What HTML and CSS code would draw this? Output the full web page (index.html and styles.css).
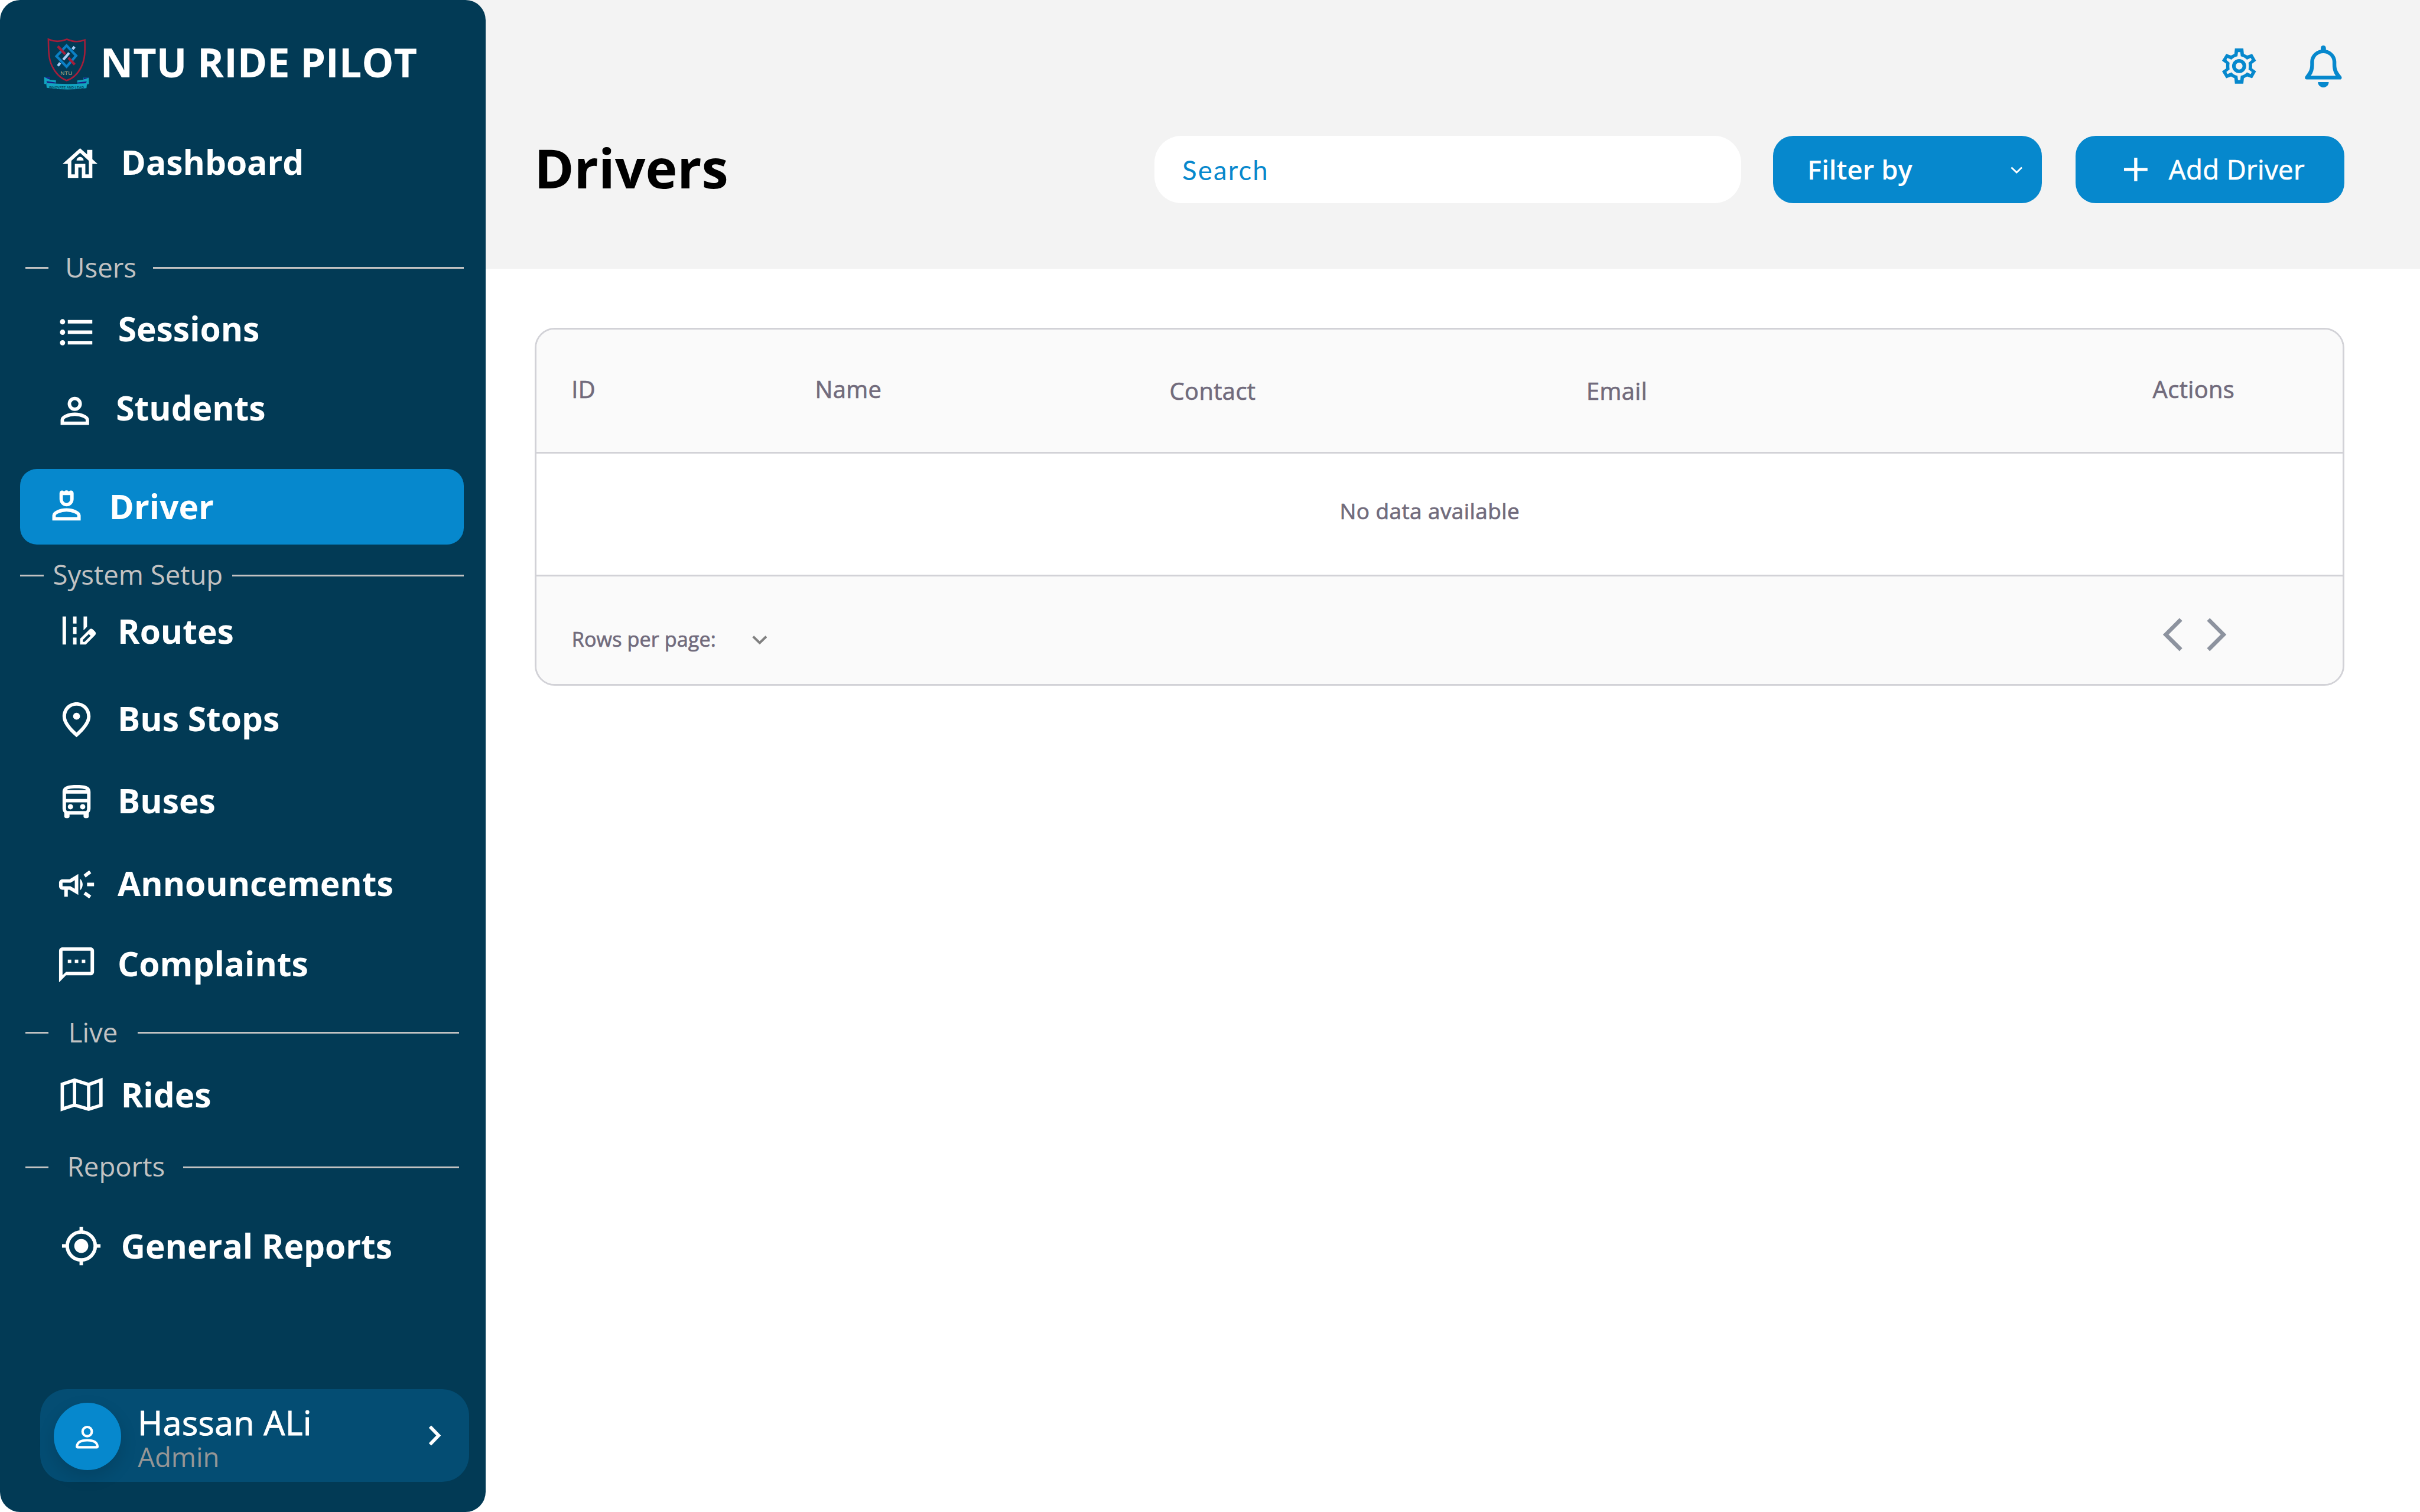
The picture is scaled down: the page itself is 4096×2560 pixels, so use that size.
FILE: index.html
```html
<!DOCTYPE html>
<html lang="en">
<head>
<meta charset="utf-8">
<title>NTU Ride Pilot – Drivers</title>
<link rel="stylesheet" href="styles.css">
</head>
<body>
<aside class="sidebar">
  <div class="brand">
    <svg class="brand-logo" viewBox="60 48 360 400">
      <path d="M106 71Q170 100 238 71Q306 100 366 76C368 150 370 210 340 270C318 314 280 352 236 366C190 348 155 310 132 262C104 205 108 140 106 71Z" fill="none" stroke="#a41e3a" stroke-width="11"/>
      <path d="M236 116L304 189L236 267L164 192Z" fill="none" stroke="#0b80c5" stroke-width="18"/>
      <path d="M293 125L278 142M254 169L212 217M190 240L174 261" stroke="#a9cff5" stroke-width="18"/>
      <path d="M173 121L226 178M249 203L294 252" stroke="#a41e3a" stroke-width="18"/>
      <text x="234" y="325" text-anchor="middle" class="crest-name">NTU</text>
      <path d="M76 341L116 341V360L160 364V388L90 384V392L76 390ZM395 345L356 345V360L312 366V390L382 384V395L395 390Z" fill="#12a3c0"/>
      <path d="M78 342H116V359ZM394 346H358V358ZM92 370L160 380V388L98 383ZM380 372L312 380V388L374 385Z" fill="#1b1b86"/>
      <path d="M90 382Q236 398 382 384L378 420Q236 440 94 418Z" fill="#12a3c0"/>
      <text x="235" y="423" text-anchor="middle" class="crest-motto">INNOVATE AND LEAD</text>
    </svg>
    <span class="brand-name">NTU RIDE PILOT</span>
  </div>
  <nav class="nav">
    <a class="item item-dashboard">
      <svg class="icon" viewBox="0 0 24 24"><path d="M19 9.3V4h-3v2.6L12 3 2 12h3v8h6v-6h2v6h6v-8h3l-3-2.7zM17 18h-2v-6H9v6H7v-7.81l5-4.5 5 4.5V18zM10 10h4c0-1.1-.9-2-2-2s-2 .9-2 2z"/></svg>
      <span>Dashboard</span>
    </a>
    <div class="divider divider-users"><span>Users</span></div>
    <a class="item item-sessions">
      <svg class="icon" viewBox="0 0 24 24"><path d="M7 5h14v2H7zM7 11h14v2H7zM7 17h14v2H7z"/><circle cx="4" cy="6" r="1.5"/><circle cx="4" cy="12" r="1.5"/><circle cx="4" cy="18" r="1.5"/></svg>
      <span>Sessions</span>
    </a>
    <a class="item item-students">
      <svg class="icon line" viewBox="84 -6.5 300 300"><circle cx="234" cy="94" r="38.5"/><path d="M145 232V208C145 188 190 168 234.5 168S324 188 324 208V232Z"/></svg>
      <span>Students</span>
    </a>
    <a class="item item-driver">
      <svg class="icon" viewBox="24 678.5 300 300"><path fill-rule="evenodd" d="M124 735C124 712 146 708 157 722C164 711 184 711 190 722C202 708 225 712 225 735V776A50.500 51 0 0 1 124 776ZM148 747V777A26 27 0 0 0 200 777V747Z"/><path class="line" d="M85 916V893C85 873 130 853 174 853S263 873 263 893V916Z"/></svg>
      <span>Driver</span>
    </a>
    <div class="divider divider-system"><span>System Setup</span></div>
    <a class="item item-routes">
      <svg class="icon" viewBox="0 0 24 24"><path d="M18 4h-2v7.900l2-2V4zM4 4h2v16H4V4zM10 4h2v4h-2V4zM10 10h2v4h-2v-4zM10 16h2v4h-2v-4zM22.560 12.590l-1.150-1.150c-.590-.590-1.540-.590-2.120 0L14 16.730V20h3.270l5.290-5.290C23.150 14.120 23.150 13.170 22.560 12.590zM16.580 18.450h-1.030v-1.030L19 13.970 20.030 15 16.580 18.450z"/></svg>
      <span>Routes</span>
    </a>
    <a class="item item-stops">
      <svg class="icon" viewBox="0 0 24 24"><path fill-rule="evenodd" d="M12 2c4.200 0 8 3.220 8 8.200 0 3.320-2.670 7.250-8 11.800-5.330-4.550-8-8.480-8-11.800C4 5.220 7.800 2 12 2zM18 10.200C18 6.570 15.350 4 12 4s-6 2.570-6 6.200c0 2.340 1.950 5.440 6 9.140 4.050-3.700 6-6.800 6-9.140z"/><circle cx="12" cy="10" r="2"/></svg>
      <span>Bus Stops</span>
    </a>
    <a class="item item-buses">
      <svg class="icon" viewBox="0 0 24 24"><path fill-rule="evenodd" d="M12 2C8 2 4 2.500 4 6v9.500c0 .950.380 1.810 1 2.440V20c0 .550.450 1 1 1h1c.550 0 1-.450 1-1v-1h8v1c0 .550.450 1 1 1h1c.550 0 1-.450 1-1v-2.060c.620-.630 1-1.490 1-2.440V6c0-3.500-3.580-4-8-4zm5.660 2.990H6.340C6.890 4.460 8.310 4 12 4s5.110.460 5.660.990zm.340 2V10H6V6.990h12zm-.340 9.740-.290.270H6.630l-.290-.270C6.210 16.620 6 16.370 6 15.500V12h12v3.500c0 .870-.210 1.120-.340 1.230z"/><circle cx="8.500" cy="14.500" r="1.500"/><circle cx="15.500" cy="14.500" r="1.500"/></svg>
      <span>Buses</span>
    </a>
    <a class="item item-announcements">
      <svg class="icon" viewBox="0 0 24 24"><path d="M18 11v2h4v-2h-4zM16 17.610c.960.710 2.210 1.650 3.200 2.390.400-.530.800-1.070 1.200-1.600-.990-.740-2.240-1.680-3.200-2.400-.400.540-.800 1.080-1.200 1.610zM20.400 5.600C20 5.070 19.600 4.530 19.200 4c-.990.740-2.240 1.680-3.200 2.400.400.530.800 1.070 1.200 1.600.960-.720 2.210-1.650 3.200-2.400zM15.500 12c0-1.330-.580-2.530-1.500-3.350v6.690c.920-.810 1.500-2.010 1.500-3.340z"/><path fill-rule="evenodd" d="M4 9c-1.100 0-2 .900-2 2v2c0 1.100.900 2 2 2h1v4h2v-4h1l5 3V6L8 9H4zM9.030 10.710L11 9.530v4.940l-1.970-1.180-.480-.290H4v-2h4.550l.480-.290z"/></svg>
      <span>Announcements</span>
    </a>
    <a class="item item-complaints">
      <svg class="icon" viewBox="0 0 24 24"><path fill-rule="evenodd" d="M20 2H4c-1.100 0-1.990.900-1.990 2L2 22l4-4h14c1.100 0 2-.900 2-2V4c0-1.100-.900-2-2-2zm0 14H6l-2 2V4h16v12z"/><path d="M7 9h2v2H7V9zm4 0h2v2h-2V9zm4 0h2v2h-2V9z"/></svg>
      <span>Complaints</span>
    </a>
    <div class="divider divider-live"><span>Live</span></div>
    <a class="item item-rides">
      <svg class="icon line" viewBox="36 639 25.400 25"><path d="M37.200 645.200L44.500 642.800L52.900 645.400L60.200 642.800V657.800L52.900 660.100L44.500 657.600L37.200 660ZM44.500 642.800V657.600M52.900 645.400V660.100"/></svg>
      <span>Rides</span>
    </a>
    <div class="divider divider-reports"><span>Reports</span></div>
    <a class="item item-general">
      <svg class="icon" viewBox="0 0 24 24"><circle cx="12" cy="12" r="4"/><circle cx="12" cy="12" r="8" fill="none" stroke="currentColor" stroke-width="2"/><path d="M11 1h2v3h-2zM11 20h2v3h-2zM1 11h3v2H1zM20 11h3v2h-3z"/></svg>
      <span>General Reports</span>
    </a>
  </nav>
  <div class="user">
    <div class="avatar">
      <svg viewBox="84 -6.500 300 300"><circle cx="234" cy="86" r="46"/><path d="M139 242C134 242 131 238 132 233C136 190 178 172 234 172S332 190 336 233C337 238 334 242 329 242Z"/></svg>
    </div>
    <div class="user-text">
      <span class="user-name">Hassan ALi</span>
      <span class="user-role">Admin</span>
    </div>
    <svg class="user-arrow" viewBox="0 0 8 13"><path d="M1 1.200L6.100 6.500L1 11.800"/></svg>
  </div>
</aside>
<main class="main">
  <header class="header">
    <div class="tools">
      <svg class="gear" viewBox="84 78 252 252"><path fill-rule="evenodd" d="M180 78H240L244 117L268 129L303 117L331 166L302 188Q304 204 302 220L331 241L303 291L267 278L244 291L240 330H180L176 291L152 278L118 291L88 241L118 220Q116 204 118 188L88 166L118 117L152 129L176 117ZM202 104L198 134Q170 142 155 158L126 146L119 160L142 180Q138 204 142 228L119 246L126 262L155 249Q172 268 198 273L202 304H218L222 273Q248 268 266 249L293 262L300 246L277 228Q281 204 277 180L300 160L293 146L266 158Q250 142 222 134L218 104Z"/><circle cx="210" cy="204" r="37.500" fill="none" stroke="currentColor" stroke-width="26"/></svg>
      <svg class="bell" viewBox="678 54 264 300"><path fill-rule="evenodd" d="M692 297C679 297 675 283 683 273C705 246 717 225 717 192V170C717 130 750 93 792 85V73C792 48 829 48 829 73V85C870 93 903 130 903 170V192C903 225 915 246 938 273C946 283 941 297 929 297ZM721 270H899C885 250 876 225 876 192V170C876 135 845 109 810 109C775 109 744 135 744 170V192C744 225 736 250 721 270Z"/><path d="M772 316H849C849 337 832 354 810.500 354S772 337 772 316Z"/></svg>
    </div>
    <div class="controls">
      <h1 class="title">Drivers</h1>
      <div class="search">Search</div>
      <div class="button filter">
        <span>Filter by</span>
        <svg class="filter-arrow" viewBox="0 0 7.200 4.400"><path d="M.5.500L3.600 3.500L6.700.500"/></svg>
      </div>
      <div class="button add">
        <svg class="plus" viewBox="0 0 14 14"><path d="M7 0V14M0 7H14"/></svg>
        <span class="medium">Add Driver</span>
      </div>
    </div>
  </header>
  <section class="table medium">
    <div class="table-head">
      <span class="raised">ID</span>
      <span class="raised">Name</span>
      <span>Contact</span>
      <span>Email</span>
      <span class="raised">Actions</span>
    </div>
    <div class="table-empty">No data available</div>
    <div class="table-foot">
      <span class="rows">Rows per page:</span>
      <svg class="rows-arrow" viewBox="0 0 9 5.400"><path d="M.6.600L4.500 4.400L8.400.600"/></svg>
      <div class="pager">
        <svg viewBox="0 0 12 20"><path d="M11 1L2 10L11 19"/></svg>
        <svg viewBox="0 0 12 20"><path d="M1 1L10 10L1 19"/></svg>
      </div>
    </div>
  </section>
</main>
</body>
</html>
```
FILE: styles.css
```css
/* 1rem is ten units of the 1440-unit wide layout */
html { font-size: calc(100vw / 144); }
* { box-sizing: border-box; }
body {
  margin: 0;
  height: 90rem;
  display: flex;
  background: #fff;
  overflow: hidden;
  font-family: "Open Sans", "Noto Sans", sans-serif;
  font-size: 1.6rem;
}
svg { display: block; flex: none; fill: currentColor; }

/* A weight between regular and semibold */
.medium {
  font-weight: 400;
  letter-spacing: .009em;
  -webkit-text-stroke: .016em currentColor;
}

/* Sidebar */
.sidebar {
  position: relative;
  z-index: 1;
  flex: none;
  width: 28.9rem;
  height: 90rem;
  border-radius: 1.2rem;
  background: #023a55;
  color: #fff;
}
.brand {
  height: 8.16rem;
  padding: 1.65rem 0 0 2.5rem;
  display: flex;
}
.brand-logo { width: 3rem; height: 3.333rem; margin-top: .5rem; overflow: visible; }
.brand-name {
  margin: .34rem 0 0 .47rem;
  font-size: 2.4rem;
  line-height: 3.4rem;
  font-weight: 700;
  white-space: nowrap;
}
.crest-name { font: 400 41px "Liberation Sans", sans-serif; fill: #b9ae84; }
.crest-motto { font: 700 24px "Liberation Sans", sans-serif; fill: #06485f; }

.item {
  display: flex;
  align-items: flex-start;
  height: 3rem;
  font-size: 2rem;
  line-height: 3rem;
  font-weight: 700;
  white-space: nowrap;
}
.icon { width: 2.5rem; height: 2.5rem; }
.line { fill: none; stroke: currentColor; stroke-width: 24.5; }

.item-dashboard { padding-left: 3.52rem; gap: 1.18rem; }
.item-dashboard .icon { margin-top: .36rem; }
.item-sessions { margin-top: 1.08rem; padding-left: 3.3rem; gap: 1.22rem; }
.item-sessions .icon { margin-top: .44rem; }
.item-students { margin-top: 1.69rem; padding-left: 3.2rem; gap: 1.2rem; }
.item-students .icon { margin-top: .44rem; }
.item-driver {
  margin: 2.14rem 1.3rem 0 1.2rem;
  width: 26.4rem;
  height: 4.5rem;
  padding: .76rem 0 0 1.5rem;
  gap: 1.3rem;
  border-radius: 1rem;
  background: #0688cd;
}
.item-driver .icon { margin-top: .24rem; }
.item-routes { margin-top: .77rem; padding-left: 3.31rem; gap: 1.19rem; }
.item-routes .icon { margin-top: .22rem; }
.item-stops { margin-top: 2.19rem; padding-left: 3.31rem; gap: 1.19rem; }
.item-buses { margin-top: 1.91rem; padding-left: 3.31rem; gap: 1.19rem; }
.item-announcements { margin-top: 1.9rem; padding-left: 3.31rem; gap: 1.19rem; }
.item-complaints { margin-top: 1.79rem; padding-left: 3.31rem; gap: 1.19rem; }
.item-stops .icon,
.item-buses .icon,
.item-announcements .icon,
.item-complaints .icon { margin-top: .33rem; }
.item-rides { margin-top: 1.13rem; padding-left: 3.6rem; gap: 1.06rem; }
.item-rides .icon { width: 2.54rem; margin-top: .25rem; stroke-width: 2; }
.item-general { margin-top: 2.13rem; padding-left: 3.59rem; gap: 1.11rem; }
.item-general .icon { margin-top: .25rem; }

.divider {
  display: flex;
  align-items: center;
  height: 2.2rem;
  line-height: 2.2rem;
  color: #c2c2c2;
  white-space: nowrap;
}
.divider::before,
.divider::after {
  content: "";
  height: .106rem;
  margin-top: .1rem;
  background: #c2c2c2;
}
.divider::before { width: 1.4rem; }
.divider::after { flex: 1; }
.divider-users { margin: 3.64rem 1.3rem 0 1.5rem; }
.divider-users span { width: 6.2rem; padding-left: .98rem; }
.divider-system { margin: .69rem 1.3rem 0 1.2rem; }
.divider-system span { width: 11.2rem; padding-left: .55rem; }
.divider-live { margin: 1.47rem 1.6rem 0 1.5rem; }
.divider-live span { width: 5.3rem; padding-left: 1.17rem; }
.divider-reports { margin: 1.67rem 1.6rem 0 1.5rem; }
.divider-reports span { width: 8rem; padding-left: 1.1rem; }

.user {
  display: flex;
  align-items: flex-start;
  margin: 7.05rem 0 0 2.4rem;
  width: 25.5rem;
  height: 5.5rem;
  padding: .8rem 1.6rem 0 .8rem;
  border-radius: 1.6rem;
  background: #044d73;
}
.avatar {
  flex: none;
  display: flex;
  justify-content: center;
  width: 4rem;
  height: 4rem;
  padding-top: 1.15rem;
  border-radius: 50%;
  background: #0688cd;
  box-shadow: 0 .4rem 1rem rgba(0, 0, 0, .13);
}
.avatar svg { width: 1.8rem; height: 1.8rem; fill: none; stroke: currentColor; stroke-width: 24; }
.user-text { display: flex; flex-direction: column; margin: -.05rem 0 0 1rem; }
.user-name {
  font-size: 2rem;
  line-height: 2.4rem;
  letter-spacing: .02rem;
  -webkit-text-stroke: .018em currentColor;
  white-space: nowrap;
}
.user-role { margin-top: -.04rem; line-height: 1.8rem; color: #969696; }
.user-arrow {
  width: .8rem;
  height: 1.3rem;
  margin: 1.3rem 0 0 auto;
  fill: none;
  stroke: currentColor;
  stroke-width: 2;
}

/* Page header */
.main { flex: 1; margin-left: -2rem; }
.header { height: 16rem; background: #f3f3f3; }
.tools {
  display: flex;
  justify-content: flex-end;
  gap: 2.85rem;
  height: 8.1rem;
  padding: 2.7rem 4.65rem 0 0;
  color: #0688cd;
}
.gear { width: 2.1rem; height: 2.1rem; margin-top: .2rem; }
.bell { width: 2.2rem; height: 2.5rem; }
.controls { display: flex; height: 4rem; padding: 0 4.5rem 0 4.89rem; }
.title { margin: -.1rem auto 0 0; font-size: 3.2rem; line-height: 4rem; font-weight: 700; color: #000; }
.search {
  width: 34.9rem;
  padding-left: 1.65rem;
  border-radius: 1.6rem;
  background: #fff;
  color: #0688cd;
  font-family: Lato, "Open Sans", sans-serif;
  font-size: 1.6rem;
  line-height: 4.08rem;
  letter-spacing: .075rem;
}
.button {
  display: flex;
  width: 16rem;
  border-radius: 1.2rem;
  background: #0688cd;
  color: #fff;
  line-height: 4rem;
  white-space: nowrap;
}
.filter { margin-left: 1.9rem; padding: 0 1.14rem 0 2.04rem; justify-content: space-between; font-weight: 600; }
.filter-arrow { width: .72rem; height: .44rem; margin-top: 1.81rem; fill: none; stroke: currentColor; }
.add { margin-left: 2rem; padding-left: 2.9rem; gap: 1.25rem; }
.plus { width: 1.4rem; height: 1.4rem; margin-top: 1.3rem; stroke: currentColor; stroke-width: 1.9; }

/* Drivers table */
.table {
  margin: 3.5rem 4.5rem 0 4.9rem;
  height: 21.3rem;
  border: .106rem solid #d2d2d7;
  border-radius: 1.2rem;
  overflow: hidden;
  color: #716b7c;
}
.table-head {
  display: grid;
  grid-template-columns: 14.49rem 21.1rem 24.8rem 33.7rem 1fr;
  align-items: center;
  height: 7.4rem;
  padding-left: 2.1rem;
  border-bottom: .106rem solid #d2d2d7;
  background: #fafafa;
  font-size: 1.4rem;
}
.raised { padding-bottom: .2rem; }
.table-empty {
  display: flex;
  align-items: center;
  justify-content: center;
  height: 7.3rem;
  padding: 0 1.15rem .42rem 0;
  border-bottom: .106rem solid #d2d2d7;
  font-size: 1.3rem;
}
.table-foot {
  display: flex;
  align-items: flex-start;
  height: 6.4rem;
  padding: 0 6.9rem 0 2.12rem;
  background: #fafafa;
}
.rows { width: 10.72rem; margin-top: 2.74rem; font-size: 1.2rem; line-height: 2rem; letter-spacing: .003em; }
.rows-arrow { width: .9rem; height: .54rem; margin-top: 3.52rem; fill: none; stroke: #808080; stroke-width: 1.4; }
.pager { display: flex; gap: 1.44rem; margin: 2.48rem 0 0 auto; color: #8d939f; }
.pager svg { width: 1.2rem; height: 2rem; fill: none; stroke: currentColor; stroke-width: 2.4; }
```
